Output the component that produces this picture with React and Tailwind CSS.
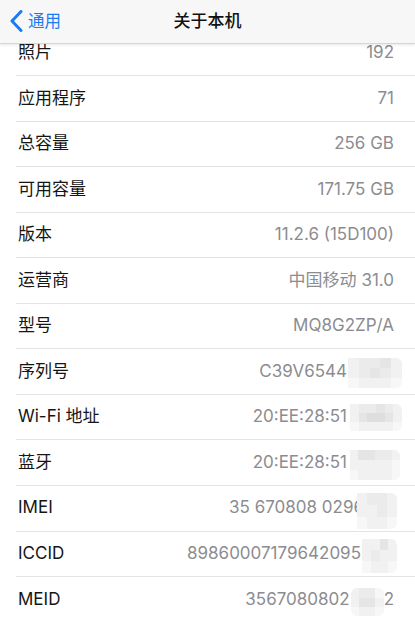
import React from 'react';

const font = { fontFamily: 'Inter, "Noto Sans CJK SC", sans-serif' };

// pale grey tiles of the pixelated redaction
const tone = {
  a: 'bg-[#f7f7f7]',
  b: 'bg-[#f1f1f1]',
  c: 'bg-[#ebebeb]',
  d: 'bg-[#e5e5e5]',
  e: 'bg-[#dedede]',
};

const Mosaic = ({ pattern, className }) => (
  <span className={`relative z-10 inline-flex flex-col self-center overflow-hidden rounded-r-md ${className}`}>
    {pattern.map((line, i) => (
      <span key={i} className="flex flex-1">
        {line.split('').map((k, j) => (
          <span key={j} className={`flex-1 ${tone[k]}`} />
        ))}
      </span>
    ))}
  </span>
);

const rows = [
  { label: '照片', value: '192' },
  { label: '应用程序', value: '71' },
  { label: '总容量', value: '256 GB' },
  { label: '可用容量', value: '171.75 GB' },
  { label: '版本', value: '11.2.6 (15D100)' },
  { label: '运营商', value: '中国移动 31.0' },
  { label: '型号', value: 'MQ8G2ZP/A' },
  {
    label: '序列号',
    value: 'C39V6544',
    mosaic: { pattern: ['bccdb', 'bcdcb', 'abbba'], className: 'w-[54px] h-[30px] -mr-[8px] ml-[1px] mt-[2px]' },
  },
  {
    label: 'Wi-Fi 地址',
    value: '20:EE:28:51',
    mosaic: { pattern: ['bccdcb', 'bdeedb', 'abbbba'], className: 'w-[52px] h-[27px] -mr-[8px] ml-[3px]' },
  },
  {
    label: '蓝牙',
    value: '20:EE:28:51',
    mosaic: { pattern: ['bddccb', 'bbbbba', 'abbbba'], className: 'w-[50px] h-[30px] -mr-[6px] ml-[3px] mt-[4px]' },
  },
  {
    label: 'IMEI',
    value: '35 670808 0296',
    mosaic: { pattern: ['bccb', 'bbcb', 'abba'], className: 'w-[40px] h-[36px] -mr-[3px] -ml-[7px] mt-[6px]' },
  },
  {
    label: 'ICCID',
    value: '89860007179642095',
    mosaic: { pattern: ['bbdb', 'bcbb', 'abba'], className: 'w-[35px] h-[34px] -mr-[3px] ml-[1px] mt-[4px]' },
  },
  {
    label: 'MEID',
    value: '3567080802',
    tail: '2',
    mosaic: { pattern: ['bcca', 'bddb', 'abba'], className: 'w-[33px] h-[28px] ml-[1px] mt-[6px] rounded-md' },
  },
];

const App = () => {
  return (
    <div className="h-[618px] w-[415px] overflow-hidden bg-white" style={font}>
      {/* nav bar */}
      <div className="relative z-20 grid h-[44px] grid-cols-[1fr_auto_1fr] items-center border-b border-[#d6d6d8] bg-[#f7f7f7] shadow-[0_1px_3px_rgba(0,0,0,0.10)]">
        <div className="flex items-center pl-[10px] text-[#1a7cf2]">
          <svg width="13" height="22" viewBox="0 0 13 22" className="-mt-[1px]">
            <path d="M11 1.5 L2 11 L11 20.5" fill="none" stroke="currentColor" strokeWidth="3" strokeLinecap="round" strokeLinejoin="round" />
          </svg>
          <span className="ml-[5px] text-[16.5px] leading-none">通用</span>
        </div>
        <div className="text-[17px] font-medium leading-none text-[#111]">关于本机</div>
        <div />
      </div>

      {/* list, scrolled a little under the bar */}
      <div className="-mt-[13.5px]">
        {rows.map(row => (
          <div key={row.label} className="ml-[16px] flex h-[45.55px] items-center justify-between border-b border-[#e3e3e5] pl-[2px] pr-[21px]">
            <span className="text-[17px] text-[#151515]">{row.label}</span>
            <span className="flex h-full items-center text-[17px] text-[#8c8c90]">
              <span className="relative z-0">{row.value}</span>
              {row.mosaic && <Mosaic {...row.mosaic} />}
              {row.tail && <span>{row.tail}</span>}
            </span>
          </div>
        ))}
      </div>
    </div>
  );
};

export default App;
